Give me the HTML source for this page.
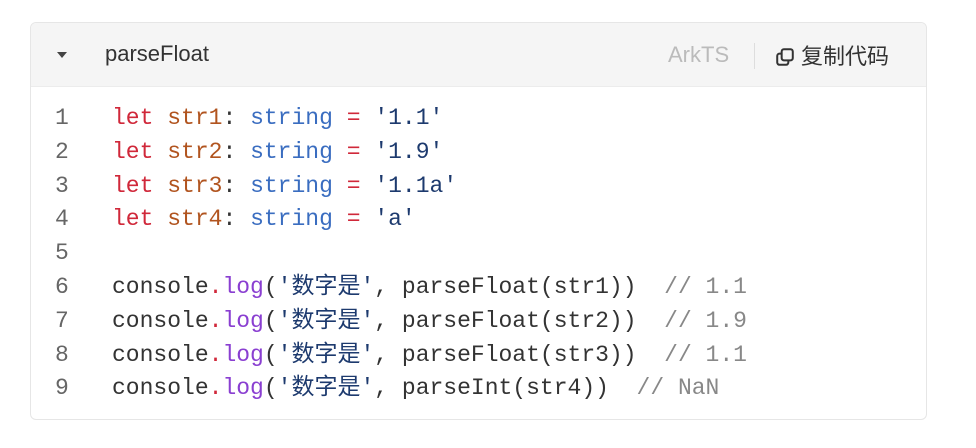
<!DOCTYPE html>
<html><head><meta charset="utf-8"><style>
body{margin:0;width:976px;height:448px;background:#fff;overflow:hidden;font-family:"Liberation Sans","Noto Sans CJK SC",sans-serif}
.card{position:absolute;left:30px;top:22px;width:895px;height:396px;border:1px solid #e6e6e6;border-radius:6px;overflow:hidden;background:#fff}
.hd{height:63px;background:#f5f5f5;border-bottom:1px solid #ececec;position:relative}
.arrow{position:absolute;left:26px;top:29px;width:0;height:0;border-left:5px solid transparent;border-right:5px solid transparent;border-top:6px solid #444}
.title{position:absolute;left:74px;top:18px;font-size:22px;color:#333}
.lang{position:absolute;left:637px;top:19px;font-size:22px;color:#bbb}
.sep{position:absolute;left:723px;top:20px;width:1px;height:26px;background:#ddd}
.copy{position:absolute;left:744px;top:16px;font-size:22px;color:#333}
.code{position:absolute;left:0;top:79px;font-family:"Liberation Mono","Noto Sans CJK SC",monospace;font-size:23px;line-height:33.8px;white-space:pre}
.ln{position:absolute;left:24px;width:20px;text-align:left;color:#666}
.l{position:absolute;left:81px;color:#333}
.k{color:#d0283a}.v{color:#b1541f}.t{color:#3a6dc0}.s{color:#1d3a6e}.f{color:#8a3fd1}.c{color:#888}
</style></head><body>
<div class="card">
<div class="hd"><div class="arrow"></div><div class="title">parseFloat</div><div class="lang">ArkTS</div><div class="sep"></div>
<div class="copy"><svg width="20" height="20" viewBox="0 0 18 18" style="vertical-align:-3px;margin-right:6px"><rect x="6" y="2" width="10" height="10" rx="2" fill="none" stroke="#333" stroke-width="1.8"/><path d="M6 6H4a2 2 0 0 0-2 2v6a2 2 0 0 0 2 2h6a2 2 0 0 0 2-2v-2" fill="none" stroke="#333" stroke-width="1.8"/></svg>复制代码</div></div>
<div class="code">
<div class="ln" style="top:0">1</div><div class="l" style="top:0"><span class="k">let</span> <span class="v">str1</span>: <span class="t">string</span> <span class="k">=</span> <span class="s">'1.1'</span></div>
<div class="ln" style="top:33.8px">2</div><div class="l" style="top:33.8px"><span class="k">let</span> <span class="v">str2</span>: <span class="t">string</span> <span class="k">=</span> <span class="s">'1.9'</span></div>
<div class="ln" style="top:67.6px">3</div><div class="l" style="top:67.6px"><span class="k">let</span> <span class="v">str3</span>: <span class="t">string</span> <span class="k">=</span> <span class="s">'1.1a'</span></div>
<div class="ln" style="top:101.4px">4</div><div class="l" style="top:101.4px"><span class="k">let</span> <span class="v">str4</span>: <span class="t">string</span> <span class="k">=</span> <span class="s">'a'</span></div>
<div class="ln" style="top:135.2px">5</div>
<div class="ln" style="top:169px">6</div><div class="l" style="top:169px">console<span class="k">.</span><span class="f">log</span>(<span class="s">'数字是'</span>, parseFloat(str1))  <span class="c">// 1.1</span></div>
<div class="ln" style="top:202.8px">7</div><div class="l" style="top:202.8px">console<span class="k">.</span><span class="f">log</span>(<span class="s">'数字是'</span>, parseFloat(str2))  <span class="c">// 1.9</span></div>
<div class="ln" style="top:236.6px">8</div><div class="l" style="top:236.6px">console<span class="k">.</span><span class="f">log</span>(<span class="s">'数字是'</span>, parseFloat(str3))  <span class="c">// 1.1</span></div>
<div class="ln" style="top:270.4px">9</div><div class="l" style="top:270.4px">console<span class="k">.</span><span class="f">log</span>(<span class="s">'数字是'</span>, parseInt(str4))  <span class="c">// NaN</span></div>
</div>
</div>
</body></html>
